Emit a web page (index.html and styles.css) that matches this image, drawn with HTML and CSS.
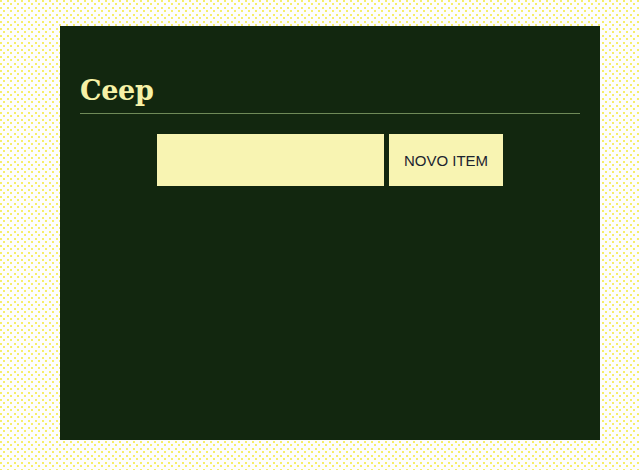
FILE: index.html
```html
<!DOCTYPE html>
<html lang="pt">
<head>
<meta charset="utf-8">
<title>Ceep</title>
<link rel="stylesheet" href="styles.css">
</head>
<body>
<main class="panel">
  <header class="header">
    <h1 class="logo">Ceep</h1>
  </header>
  <form class="form">
    <input class="form-input" type="text">
    <button class="form-button" type="button">NOVO ITEM</button>
  </form>
</main>
</body>
</html>
```

FILE: styles.css
```css
html, body {
  margin: 0;
  padding: 0;
}
body {
  background-color: #fdfdfd;
  background-image:
    radial-gradient(circle at 1px 1px, #f6ee6a 0.9px, transparent 1px),
    radial-gradient(circle at 4px 4px, #f6ee6a 0.9px, transparent 1px);
  background-size: 7px 7px;
  padding-top: 26px;
  height: 444px;
}
.panel {
  box-sizing: border-box;
  margin-left: 60px;
  width: 540px;
  height: 414px;
  background: #12270f;
  padding: 0 20px;
}
.header {
  padding-top: 49px;
  border-bottom: 1px solid #6f8a58;
  height: 38px;
  box-sizing: content-box;
}
.logo {
  margin: 0;
  font-family: "DejaVu Serif", serif;
  font-weight: bold;
  font-size: 27px;
  line-height: 32px;
  color: #f6f1a6;
  letter-spacing: -0.3px;
}
.form {
  display: flex;
  justify-content: center;
  gap: 5px;
  margin-top: 20px;
}
.form-input {
  box-sizing: border-box;
  width: 227px;
  height: 52px;
  border: none;
  background: #f8f4b2;
  padding: 0 10px;
  outline: none;
}
.form-button {
  box-sizing: border-box;
  width: 114px;
  height: 52px;
  border: none;
  background: #f8f4b2;
  font-family: "Liberation Sans", Arial, sans-serif;
  font-size: 15px;
  color: #1c2430;
  padding: 0;
}
```
